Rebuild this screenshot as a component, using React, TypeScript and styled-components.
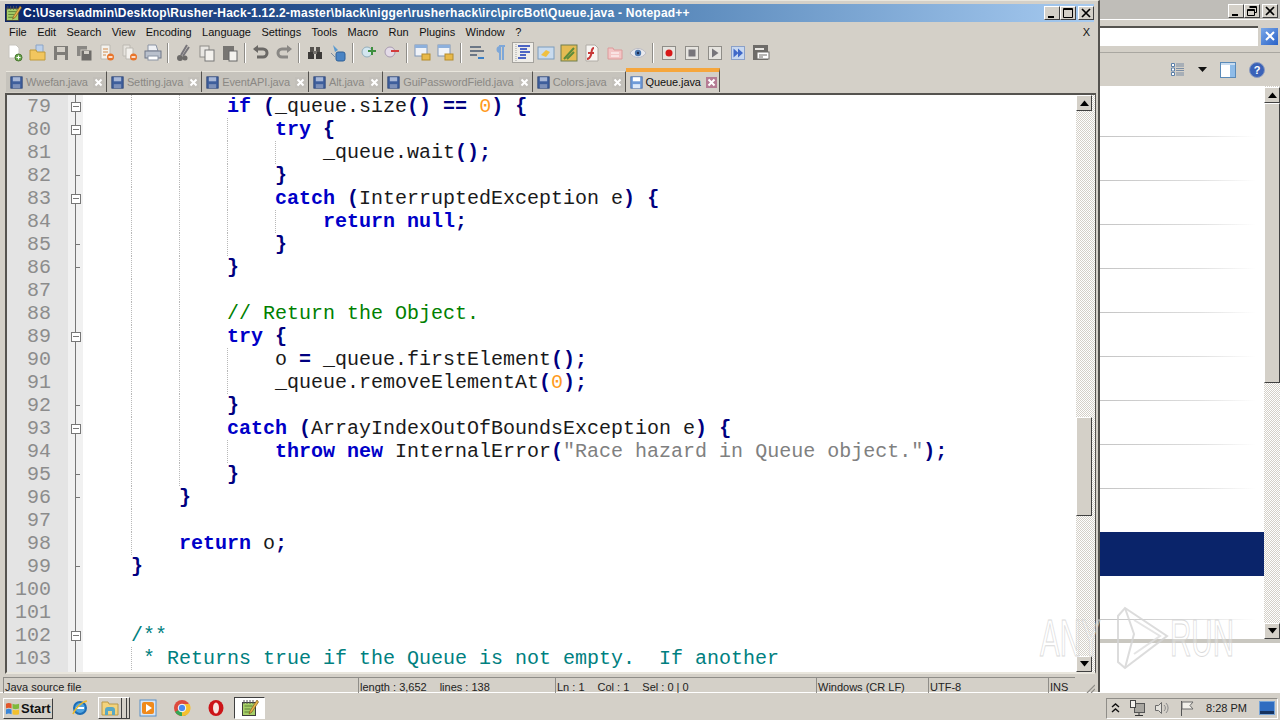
import React from 'react';
import styled, {createGlobalStyle} from 'styled-components';

const GlobalStyle = createGlobalStyle`
  html, body {
    margin: 0;
    padding: 0;
    width: 1280px;
    height: 720px;
    overflow: hidden;
    background: #ffffff;
    font-family: "Liberation Sans", Arial, sans-serif;
  }
  * {
    box-sizing: border-box;
  }
`

type TokenKind = 'plain' | 'kw' | 'op' | 'num' | 'str' | 'com' | 'doc';
type Token = [TokenKind, string];
type CodeLine = { n: number; level: number; guides: number; lead?: boolean; fold?: 'box' | 'tick'; tokens: Token[] };

const lines: CodeLine[] = [
    {n: 79, level: 3, guides: 2, fold: 'box', tokens: [['kw', 'if'], ['plain', ' '], ['op', '('], ['plain', '_queue.size'], ['op', '()'], ['plain', ' '], ['op', '=='], ['plain', ' '], ['num', '0'], ['op', ')'], ['plain', ' '], ['op', '{']]},
    {n: 80, level: 4, guides: 3, fold: 'box', tokens: [['kw', 'try'], ['plain', ' '], ['op', '{']]},
    {n: 81, level: 5, guides: 4, tokens: [['plain', '_queue.wait'], ['op', '();']]},
    {n: 82, level: 4, guides: 3, fold: 'tick', tokens: [['op', '}']]},
    {n: 83, level: 4, guides: 3, fold: 'box', tokens: [['kw', 'catch'], ['plain', ' '], ['op', '('], ['plain', 'InterruptedException e'], ['op', ')'], ['plain', ' '], ['op', '{']]},
    {n: 84, level: 5, guides: 4, tokens: [['kw', 'return'], ['plain', ' '], ['kw', 'null'], ['op', ';']]},
    {n: 85, level: 4, guides: 3, fold: 'tick', tokens: [['op', '}']]},
    {n: 86, level: 3, guides: 2, fold: 'tick', tokens: [['op', '}']]},
    {n: 87, level: 3, guides: 2, tokens: []},
    {n: 88, level: 3, guides: 2, tokens: [['com', '// Return the Object.']]},
    {n: 89, level: 3, guides: 2, fold: 'box', tokens: [['kw', 'try'], ['plain', ' '], ['op', '{']]},
    {n: 90, level: 4, guides: 3, tokens: [['plain', 'o '], ['op', '='], ['plain', ' _queue.firstElement'], ['op', '();']]},
    {n: 91, level: 4, guides: 3, tokens: [['plain', '_queue.removeElementAt'], ['op', '('], ['num', '0'], ['op', ');']]},
    {n: 92, level: 3, guides: 2, fold: 'tick', tokens: [['op', '}']]},
    {n: 93, level: 3, guides: 2, fold: 'box', tokens: [['kw', 'catch'], ['plain', ' '], ['op', '('], ['plain', 'ArrayIndexOutOfBoundsException e'], ['op', ')'], ['plain', ' '], ['op', '{']]},
    {n: 94, level: 4, guides: 3, tokens: [['kw', 'throw'], ['plain', ' '], ['kw', 'new'], ['plain', ' InternalError'], ['op', '('], ['str', '"Race hazard in Queue object."'], ['op', ');']]},
    {n: 95, level: 3, guides: 2, fold: 'tick', tokens: [['op', '}']]},
    {n: 96, level: 2, guides: 1, fold: 'tick', tokens: [['op', '}']]},
    {n: 97, level: 2, guides: 1, tokens: []},
    {n: 98, level: 2, guides: 1, tokens: [['kw', 'return'], ['plain', ' o'], ['op', ';']]},
    {n: 99, level: 1, guides: 0, fold: 'tick', tokens: [['op', '}']]},
    {n: 100, level: 0, guides: 0, tokens: []},
    {n: 101, level: 0, guides: 0, tokens: []},
    {n: 102, level: 1, guides: 0, fold: 'box', tokens: [['doc', '/**']]},
    {n: 103, level: 1, guides: 0, lead: true, tokens: [['doc', '* Returns true if the Queue is not empty.  If another']]},
];

const tabs = ['Wwefan.java', 'Setting.java', 'EventAPI.java', 'Alt.java', 'GuiPasswordField.java', 'Colors.java', 'Queue.java'];
const menus = ['File', 'Edit', 'Search', 'View', 'Encoding', 'Language', 'Settings', 'Tools', 'Macro', 'Run', 'Plugins', 'Window', '?'];

const tokenColors: Record<TokenKind, string> = {
    plain: '#1a1a1a',
    kw: '#0000c8',
    op: '#000080',
    num: '#ff9a20',
    str: '#808080',
    com: '#008000',
    doc: '#008080',
};

const DiskIcon = ({active}: {active?: boolean}) => (
    <svg width="13" height="13" viewBox="0 0 16 16">
        <rect x="1" y="1" width="14" height="14" fill={active ? '#6f9bd8' : '#3f5f9c'} stroke={active ? '#4a6ea8' : '#2c4478'}/>
        <rect x="3.5" y="1.5" width="9" height="5" fill={active ? '#ffffff' : '#a9b8d6'}/>
        <rect x="3.5" y="10" width="9" height="5" fill={active ? '#dce8f8' : '#7d90b8'}/>
    </svg>
);

const CloseIcon = ({active}: {active?: boolean}) => (
    <svg width="11" height="11" viewBox="0 0 11 11">
        <rect x="0" y="0" width="11" height="11" fill={active ? '#b57c94' : '#c2bfb9'}/>
        <path d="M2.5 2.5l6 6M8.5 2.5l-6 6" stroke="#ffffff" strokeWidth="2"/>
    </svg>
);

const ToolIcon = ({kind}: {kind: string}) => {
    switch (kind) {
        case 'new':
            return <svg width="18" height="18" viewBox="0 0 18 18"><path d="M3 1h7l3 3v10H3z" fill="#fff" stroke="#c9c6c0"/><circle cx="12.5" cy="13.5" r="3.5" fill="#6aa84f" stroke="#49752f"/><path d="M12.5 11.5v4M10.5 13.5h4" stroke="#fff"/></svg>;
        case 'open':
            return <svg width="18" height="18" viewBox="0 0 18 18"><path d="M7 1h7v8H7z" fill="#bcd0ea" stroke="#8ba4c6"/><path d="M1 6h6l1 2h8v8H1z" fill="#f2c65e" stroke="#c09a3a"/></svg>;
        case 'save':
            return <svg width="18" height="18" viewBox="0 0 18 18"><rect x="2" y="2" width="14" height="14" fill="#7e7c78"/><rect x="5" y="3" width="8" height="5" fill="#d4d0c8"/><rect x="5" y="11" width="8" height="5" fill="#d4d0c8"/></svg>;
        case 'saveall':
            return <svg width="18" height="18" viewBox="0 0 18 18"><rect x="2" y="2" width="10" height="10" fill="#8a8884"/><rect x="6" y="6" width="11" height="11" fill="#6e6c69" stroke="#d4d0c8"/><rect x="9" y="7" width="5" height="3" fill="#d4d0c8"/></svg>;
        case 'close':
            return <svg width="18" height="18" viewBox="0 0 18 18"><path d="M3 1h9v14H3z" fill="#f4f2ee" stroke="#bcb9b2"/><path d="M5 5h5M5 8h5M5 11h3" stroke="#d08a4a"/><circle cx="12.5" cy="13" r="3.5" fill="#e8742a"/><path d="M10.5 13h4" stroke="#fff" strokeWidth="1.5"/></svg>;
        case 'closeall':
            return <svg width="18" height="18" viewBox="0 0 18 18"><path d="M2 1h7v11H2z" fill="#e6e3dd" stroke="#bcb9b2"/><path d="M5 4h7v11H5z" fill="#f4f2ee" stroke="#bcb9b2"/><circle cx="12.5" cy="13" r="3.5" fill="#e8742a"/><path d="M10.5 13h4" stroke="#fff" strokeWidth="1.5"/></svg>;
        case 'print':
            return <svg width="18" height="18" viewBox="0 0 18 18"><path d="M4 1h8l2 6H4z" fill="#eef0f4" stroke="#8a93a3"/><rect x="1" y="7" width="16" height="7" fill="#b9c0cc" stroke="#6f7787"/><rect x="4" y="12" width="10" height="4" fill="#fff" stroke="#8a93a3"/></svg>;
        case 'cut':
            return <svg width="18" height="18" viewBox="0 0 18 18"><path d="M12 1L6 11M14 3L8 12" stroke="#77757a" strokeWidth="2"/><circle cx="5" cy="14" r="3" fill="#6c6a68"/><circle cx="10" cy="14" r="2.5" fill="#6c6a68"/></svg>;
        case 'copy':
            return <svg width="18" height="18" viewBox="0 0 18 18"><rect x="2" y="2" width="9" height="11" fill="#e8e6e2" stroke="#8e8c88"/><rect x="7" y="6" width="9" height="11" fill="#f4f2ee" stroke="#777"/></svg>;
        case 'paste':
            return <svg width="18" height="18" viewBox="0 0 18 18"><rect x="2" y="2" width="11" height="14" fill="#777572"/><rect x="8" y="7" width="8" height="10" fill="#f4f2ee" stroke="#666"/></svg>;
        case 'undo':
            return <svg width="18" height="18" viewBox="0 0 18 18"><path d="M3 5h8a4 4 0 0 1 0 8H5" fill="none" stroke="#6b6966" strokeWidth="3"/><path d="M6 1v8L1 5z" fill="#6b6966"/></svg>;
        case 'redo':
            return <svg width="18" height="18" viewBox="0 0 18 18"><path d="M15 5H7a4 4 0 0 0 0 8h6" fill="none" stroke="#8a8885" strokeWidth="3"/><path d="M12 1v8l5-4z" fill="#8a8885"/></svg>;
        case 'find':
            return <svg width="18" height="18" viewBox="0 0 18 18"><rect x="2" y="8" width="6" height="7" fill="#3c3a38"/><rect x="10" y="8" width="6" height="7" fill="#3c3a38"/><rect x="4" y="3" width="4" height="5" fill="#55524e"/><rect x="10" y="3" width="4" height="5" fill="#55524e"/><rect x="7" y="7" width="4" height="3" fill="#77746f"/></svg>;
        case 'replace':
            return <svg width="18" height="18" viewBox="0 0 18 18"><path d="M4 1l5 5-3 2z" fill="#5a9ad0"/><rect x="7" y="8" width="9" height="9" rx="2" fill="#4a84c4" stroke="#2e6098"/><path d="M2 9l4 4" stroke="#7d8fa5"/></svg>;
        case 'zoomin':
            return <svg width="18" height="18" viewBox="0 0 18 18"><circle cx="7" cy="8" r="5" fill="#d3e6ef" stroke="#93aebb"/><path d="M12 3v8M8 7h8" stroke="#3f8f3f" strokeWidth="2"/></svg>;
        case 'zoomout':
            return <svg width="18" height="18" viewBox="0 0 18 18"><circle cx="7" cy="8" r="5" fill="#e4dbe8" stroke="#a89bb0"/><path d="M8 7h8" stroke="#d23c3c" strokeWidth="2"/></svg>;
        case 'sync':
            return <svg width="18" height="18" viewBox="0 0 18 18"><rect x="1" y="1" width="12" height="11" fill="#f0f3f8" stroke="#7e96b8"/><rect x="1" y="1" width="12" height="3" fill="#8db0dc"/><rect x="8" y="10" width="8" height="6" fill="#e8b949" stroke="#b58c2c"/></svg>;
        case 'wrap':
            return <svg width="18" height="18" viewBox="0 0 18 18"><path d="M2 3h11M2 7h14M2 11h7" stroke="#4a5a70" strokeWidth="1.5"/><path d="M10 14h6" stroke="#3a80c8" strokeWidth="2"/></svg>;
        case 'para':
            return <svg width="18" height="18" viewBox="0 0 18 18"><path d="M8 2h6M9 2v14M12 2v14" stroke="#7ea7d8" strokeWidth="2"/><path d="M9 2a3 3 0 0 0 0 7z" fill="#7ea7d8"/></svg>;
        case 'indent':
            return <svg width="22" height="21" viewBox="0 0 22 21"><rect x="0.5" y="0.5" width="21" height="20" fill="#efede8" stroke="#a5a39e"/><path d="M4 2v17" stroke="#a0a0a0" strokeDasharray="1 1"/><path d="M6 4h12M8 7h7M8 10h10M8 13h6M6 16h8" stroke="#1838b8" strokeWidth="1.6"/></svg>;
        case 'map':
            return <svg width="18" height="18" viewBox="0 0 18 18"><rect x="1" y="3" width="16" height="12" fill="#c9dbee" stroke="#7c9cbc"/><path d="M4 11l5-5 4 2-4 5z" fill="#f0c040"/></svg>;
        case 'lang':
            return <svg width="18" height="18" viewBox="0 0 18 18"><rect x="1" y="1" width="16" height="16" fill="#e4bb52" stroke="#6f7f4f"/><path d="M4 15L14 4M7 15l7-7" stroke="#5c8c3c" strokeWidth="2"/></svg>;
        case 'func':
            return <svg width="18" height="18" viewBox="0 0 18 18"><path d="M3 1h9l3 3v13H3z" fill="#f7f5f2" stroke="#b0aca6"/><path d="M11 4c-3 0-2 4-3 7s-2 4-4 4M5 9h6" fill="none" stroke="#c83838" strokeWidth="2"/></svg>;
        case 'folder':
            return <svg width="18" height="18" viewBox="0 0 18 18"><path d="M2 4h5l1 2h8v9H2z" fill="#f3c6c6" stroke="#dc9a9a"/><path d="M5 9h8M5 12h8" stroke="#ffffff"/></svg>;
        case 'eye':
            return <svg width="18" height="18" viewBox="0 0 18 18"><path d="M1 9c4-6 12-6 16 0-4 6-12 6-16 0z" fill="#e8e8ec" stroke="#bcbcc4"/><circle cx="9" cy="9" r="3.2" fill="#4c78b0"/><circle cx="9" cy="9" r="1.2" fill="#1c2c50"/></svg>;
        case 'rec':
            return <svg width="16" height="16" viewBox="0 0 16 16"><rect x="1.5" y="1.5" width="13" height="13" fill="#e6e4df" stroke="#8f8d88"/><circle cx="8" cy="8" r="3.5" fill="#d81818"/></svg>;
        case 'stop':
            return <svg width="16" height="16" viewBox="0 0 16 16"><rect x="1.5" y="1.5" width="13" height="13" fill="#e6e4df" stroke="#8f8d88"/><rect x="4.5" y="4.5" width="7" height="7" fill="#77757a"/></svg>;
        case 'play':
            return <svg width="16" height="16" viewBox="0 0 16 16"><rect x="1.5" y="1.5" width="13" height="13" fill="#e6e4df" stroke="#8f8d88"/><path d="M5 3.5l6.5 4.5L5 12.5z" fill="#77757a"/></svg>;
        case 'playm':
            return <svg width="16" height="16" viewBox="0 0 16 16"><rect x="1.5" y="1.5" width="13" height="13" fill="#c8d8f0" stroke="#8aa0c8"/><path d="M3.5 3.5l5 4.5-5 4.5zM8 3.5l5 4.5-5 4.5z" fill="#3f68c8"/></svg>;
        case 'savem':
            return <svg width="18" height="18" viewBox="0 0 18 18"><rect x="1" y="1" width="15" height="15" fill="#6e6c69"/><rect x="3" y="4" width="9" height="2" fill="#e8e6e2"/><rect x="5" y="8" width="12" height="7" fill="#fff" stroke="#6e6c69"/><path d="M7 11h8M7 13h4" stroke="#6e6c69"/></svg>;
        default:
            return null;
    }
};

const toolGroups = [
    ['new', 'open', 'save', 'saveall', 'close', 'closeall', 'print'],
    ['cut', 'copy', 'paste'],
    ['undo', 'redo'],
    ['find', 'replace'],
    ['zoomin', 'zoomout'],
    ['sync', 'sync'],
    ['wrap', 'para', 'indent', 'map', 'lang', 'func', 'folder', 'eye'],
    ['rec', 'stop', 'play', 'playm', 'savem'],
];

const WinButton = ({kind}: {kind: 'min' | 'max' | 'restore' | 'close'}) => (
    <CaptionButton>
        <svg width="12" height="12" viewBox="0 0 12 12">
            {kind === 'min' && <rect x="2" y="9" width="6" height="2" fill="#000"/>}
            {kind === 'max' && <path d="M1.5 1.5h9v9h-9zM1.5 2.5h9" fill="none" stroke="#000"/>}
            {kind === 'restore' && <path d="M3.5 1.5h7v6h-2M3.5 2.5h7M1.5 4.5h7v6h-7zM1.5 5.5h7" fill="none" stroke="#000"/>}
            {kind === 'close' && <path d="M2 2l8 8M10 2l-8 8" stroke="#000" strokeWidth="1.7"/>}
        </svg>
    </CaptionButton>
);

const Arrow = ({down}: {down?: boolean}) => (
    <ArrowButton>
        <svg width="9" height="6" viewBox="0 0 9 6">
            <path d={down ? 'M0 0h9L4.5 5.5z' : 'M0 6h9L4.5 0.5z'} fill="#000"/>
        </svg>
    </ArrowButton>
);

const NotepadIcon = ({size}: {size: number}) => (
    <svg width={size} height={size} viewBox="0 0 18 18">
        <rect x="1.5" y="3.5" width="13" height="13" fill="#a6cf68" stroke="#3c3c3c"/>
        <path d="M3 1v4M6 1v4M9 1v4M12 1v4" stroke="#555"/>
        <path d="M3.5 7h8M3.5 10h6M3.5 13h7" stroke="#5c7f36"/>
        <path d="M16 1L9 12l-1 3 3-2L17.5 3z" fill="#e9b34a" stroke="#7a5a1c" strokeWidth="0.7"/>
    </svg>
);

const App: React.FC = () => {
    return (
        <Screen>
            <GlobalStyle/>
            <Desktop>
                <NotepadWindow>
                    <TitleBar>
                        <NotepadIcon size={17}/>
                        <TitleText>C:\Users\admin\Desktop\Rusher-Hack-1.12.2-master\black\nigger\rusherhack\irc\pircBot\Queue.java - Notepad++</TitleText>
                        <CaptionGroup>
                            <WinButton kind="min"/>
                            <WinButton kind="max"/>
                            <CaptionGap/>
                            <WinButton kind="close"/>
                        </CaptionGroup>
                    </TitleBar>
                    <MenuBar>
                        {menus.map(m => <MenuItem key={m}>{m}</MenuItem>)}
                        <MenuClose>X</MenuClose>
                    </MenuBar>
                    <ToolBar>
                        {toolGroups.map((group, i) => (
                            <ToolGroup key={i}>
                                {group.map((kind, j) => <ToolSlot key={j}><ToolIcon kind={kind}/></ToolSlot>)}
                            </ToolGroup>
                        ))}
                    </ToolBar>
                    <TabStrip>
                        {tabs.map((t, i) => {
                            const active = i === tabs.length - 1;
                            return (
                                <Tab key={t} $active={active}>
                                    <DiskIcon active={active}/>
                                    <TabLabel $active={active}>{t}</TabLabel>
                                    <CloseIcon active={active}/>
                                </Tab>
                            );
                        })}
                    </TabStrip>
                    <EditorFrame>
                        <Editor>
                            <Gutter>
                                {lines.map(l => <LineNumber key={l.n}>{l.n}</LineNumber>)}
                            </Gutter>
                            <FoldMargin>
                                {lines.map(l => (
                                    <FoldCell key={l.n}>
                                        {l.fold === 'box' && <FoldBox/>}
                                        {l.fold === 'tick' && <FoldTick/>}
                                    </FoldCell>
                                ))}
                            </FoldMargin>
                            <Code>
                                {lines.map(l => (
                                    <Line key={l.n}>
                                        {Array.from({length: l.level}).map((_, i) => (
                                            <Indent key={i} $guide={i > 0 && i <= l.guides}/>
                                        ))}
                                        {l.lead && <Indent $guide $narrow/>}
                                        {l.tokens.map((tok, i) => <Tok key={i} $kind={tok[0]}>{tok[1]}</Tok>)}
                                    </Line>
                                ))}
                            </Code>
                        </Editor>
                        <ScrollBar>
                            <Arrow/>
                            <ScrollSpace $flex={306}/>
                            <Thumb $height={99}/>
                            <ScrollSpace $flex={140}/>
                            <Arrow down/>
                        </ScrollBar>
                    </EditorFrame>
                    <StatusBar>
                        <StatusCell $width={355}>Java source file</StatusCell>
                        <StatusCell $width={197} $gap={13}>
                            <span>length : 3,652</span>
                            <span>lines : 138</span>
                        </StatusCell>
                        <StatusCell $width={261} $gap={13}>
                            <span>Ln : 1</span>
                            <span>Col : 1</span>
                            <span>Sel : 0 | 0</span>
                        </StatusCell>
                        <StatusCell $width={112}>Windows (CR LF)</StatusCell>
                        <StatusCell $width={120}>UTF-8</StatusCell>
                        <StatusCell $width={27}>INS</StatusCell>
                        <Grip>
                            <svg width="10" height="10" viewBox="0 0 10 10">
                                <path d="M2 10L10 2M6 10l4-4" stroke="#8f8d88" strokeWidth="1.2"/>
                            </svg>
                        </Grip>
                    </StatusBar>
                </NotepadWindow>
                <Explorer>
                    <ExplorerTitle>
                        <CaptionGroup>
                            <WinButton kind="min"/>
                            <WinButton kind="restore"/>
                            <CaptionGap/>
                            <WinButton kind="close"/>
                        </CaptionGroup>
                    </ExplorerTitle>
                    <SearchRow>
                        <SearchBox/>
                        <SearchClear>
                            <svg width="12" height="12" viewBox="0 0 12 12">
                                <path d="M2 2l8 8M10 2l-8 8" stroke="#fff" strokeWidth="2"/>
                            </svg>
                        </SearchClear>
                    </SearchRow>
                    <ExplorerTools>
                        <svg width="15" height="15" viewBox="0 0 15 15">
                            <path d="M1.5 1.5h3v3h-3zM1.5 6h3v3h-3zM1.5 10.5h3v3h-3z" fill="#fff" stroke="#5a7fa8"/>
                            <path d="M6 2h8M6 4h8M6 6.5h8M6 8.5h8M6 11h8M6 13h8" stroke="#7a8da5"/>
                        </svg>
                        <svg width="9" height="5" viewBox="0 0 9 5"><path d="M0 0h9L4.5 5z" fill="#111"/></svg>
                        <svg width="16" height="16" viewBox="0 0 16 16">
                            <rect x="0.5" y="0.5" width="15" height="15" fill="#fff" stroke="#5a8ab8"/>
                            <rect x="10" y="1" width="5" height="14" fill="#8fbce8"/>
                            <rect x="1" y="1" width="14" height="2" fill="#c8dcf0"/>
                        </svg>
                        <svg width="16" height="16" viewBox="0 0 16 16">
                            <circle cx="8" cy="8" r="7.5" fill="#3a62b8" stroke="#8c9cc0"/>
                            <text x="8" y="12" textAnchor="middle" fontSize="11" fontWeight="bold" fill="#fff" fontFamily="Liberation Sans">?</text>
                        </svg>
                    </ExplorerTools>
                    <ExplorerBody>
                        <RowList>
                            <ListRow $height={51}/>
                            {Array.from({length: 8}).map((_, i) => <ListRow key={i} $height={44}/>)}
                            <ListRow $height={43} $plain/>
                            <SelectedRow/>
                            <ListRow $height={44}/>
                        </RowList>
                        <SideScroll>
                            <Arrow/>
                            <Thumb $height={280}/>
                            <ScrollSpace $flex={1}/>
                            <Arrow down/>
                        </SideScroll>
                    </ExplorerBody>
                    <ExplorerFooter/>
                </Explorer>
                <Watermark>
                    <WatermarkText $width={70}>ANY</WatermarkText>
                    <svg width="60" height="66" viewBox="0 0 60 66">
                        <path d="M15 2L57 30 15 62 8 56V10z" fill="none" stroke="#d4d4d4" strokeWidth="2"/>
                        <path d="M15 2L24 28 15 62" fill="none" stroke="#d4d4d4" strokeWidth="2"/>
                        <path d="M24 14L50 30 24 48" fill="none" stroke="#dedede" strokeWidth="2"/>
                    </svg>
                    <WatermarkText $width={64}>RUN</WatermarkText>
                </Watermark>
            </Desktop>
            <Taskbar>
                <StartButton>
                    <svg width="15" height="15" viewBox="0 0 16 16">
                        <path d="M1 3c2-1 4-1 6 0v5C5 7 3 7 1 8z" fill="#e2562a"/>
                        <path d="M8 3c2 1 4 1 7 0v5c-3 1-5 1-7 0z" fill="#7fba3c"/>
                        <path d="M1 9c2-1 4-1 6 0v5c-2-1-4-1-6 0z" fill="#3a86d8"/>
                        <path d="M8 9c2 1 4 1 7 0v5c-3 1-5 1-7 0z" fill="#f2c02e"/>
                    </svg>
                    Start
                </StartButton>
                <QuickLaunch>
                    <TaskIcon>
                        <svg width="18" height="18" viewBox="0 0 18 18">
                            <circle cx="9" cy="9" r="6" fill="#4fa3e0" stroke="#1c6cb4" strokeWidth="2"/>
                            <path d="M5 9h8" stroke="#fff" strokeWidth="2"/>
                            <path d="M2 15C4 10 10 3 16 2" fill="none" stroke="#e8b830" strokeWidth="1.6"/>
                        </svg>
                    </TaskIcon>
                    <TaskSlot>
                        <svg width="18" height="18" viewBox="0 0 18 18">
                            <path d="M1 3h6l1 2h9v11H1z" fill="#f3d37c" stroke="#bb9a48"/>
                            <path d="M4 16v-5a3 3 0 0 1 3-3h4a3 3 0 0 1 3 3v5h-3v-4H7v4z" fill="#58a8c4"/>
                        </svg>
                        <StackLines/>
                    </TaskSlot>
                    <TaskIcon>
                        <svg width="18" height="18" viewBox="0 0 18 18">
                            <rect x="1" y="1" width="16" height="16" fill="#d8e6f6" stroke="#5890c8"/>
                            <rect x="3" y="3" width="12" height="12" rx="2" fill="#f08a1c"/>
                            <path d="M7 5l6 4-6 4z" fill="#fff"/>
                        </svg>
                    </TaskIcon>
                    <TaskIcon>
                        <svg width="18" height="18" viewBox="0 0 18 18">
                            <circle cx="9" cy="9" r="8" fill="#dd4b3e"/>
                            <path d="M9 9L2.1 13A8 8 0 0 0 13 16z" fill="#34a853"/>
                            <path d="M9 5h7.4A8 8 0 0 1 9 17z" fill="#f5c02f"/>
                            <circle cx="9" cy="9" r="3.8" fill="#4a8af0" stroke="#fff"/>
                        </svg>
                    </TaskIcon>
                    <TaskIcon>
                        <svg width="18" height="18" viewBox="0 0 18 18">
                            <ellipse cx="9" cy="9" rx="7.5" ry="8" fill="#cc1418"/>
                            <ellipse cx="9" cy="9" rx="3" ry="5.6" fill="#f6e6e2"/>
                        </svg>
                    </TaskIcon>
                    <ActiveTask><NotepadIcon size={18}/></ActiveTask>
                </QuickLaunch>
                <Tray>
                    <svg width="9" height="10" viewBox="0 0 9 10"><path d="M1 4l3.5-3L8 4M1 9l3.5-3L8 9" fill="none" stroke="#111" strokeWidth="1.4"/></svg>
                    <svg width="16" height="16" viewBox="0 0 16 16">
                        <rect x="5.5" y="3.5" width="10" height="9" fill="#a8a6a0" stroke="#555"/>
                        <rect x="1.5" y="0.5" width="5" height="7" fill="#f4f2ee" stroke="#444"/>
                        <path d="M10 13v2M6 15.5h8" stroke="#333"/>
                    </svg>
                    <svg width="16" height="16" viewBox="0 0 16 16">
                        <path d="M1.5 5.5h3l3-3v11l-3-3h-3z" fill="#e4e2dc" stroke="#6a6a6a"/>
                        <path d="M10 5a4 4 0 0 1 0 6M12 3a7 7 0 0 1 0 10" fill="none" stroke="#8a8a8a"/>
                    </svg>
                    <svg width="16" height="16" viewBox="0 0 16 16">
                        <path d="M2.5 1v15" stroke="#555"/>
                        <path d="M3 2h11l-3 3.5 3 3.5H3z" fill="#f2f0ea" stroke="#6a6a6a"/>
                    </svg>
                    <Clock>8:28 PM</Clock>
                    <svg width="16" height="14" viewBox="0 0 16 14">
                        <rect x="0.5" y="0.5" width="15" height="13" fill="#2f6cc0" stroke="#76a4d8"/>
                        <rect x="1" y="10" width="14" height="3" fill="#16325e"/>
                    </svg>
                </Tray>
            </Taskbar>
        </Screen>
    );
};

export default App;

const Screen = styled.div`
  width: 1280px;
  height: 720px;
  display: flex;
  flex-direction: column;
  overflow: hidden;
  background: #ffffff;
`
const Desktop = styled.div`
  position: relative;
  height: 692px;
  display: flex;
  background: #ffffff;
`
const NotepadWindow = styled.div`
  width: 1100px;
  height: 692px;
  flex: none;
  display: flex;
  flex-direction: column;
  background: #d4d0c8;
  padding: 3px 2px 0 3px;
  border-top: 1px solid #e9e6dd;
  border-right: 2px solid #55534f;
`
const TitleBar = styled.div`
  height: 18px;
  flex: none;
  display: flex;
  align-items: center;
  gap: 1px;
  margin: 0 2px 0 2px;
  background: linear-gradient(90deg, #0a246a 0%, #3a6ea5 45%, #a6caf0 100%);
`
const TitleText = styled.div`
  flex: 1;
  color: #ffffff;
  font-size: 12px;
  letter-spacing: 0.23px;
  font-weight: bold;
  white-space: nowrap;
  overflow: hidden;
`
const CaptionGroup = styled.div`
  display: flex;
  align-items: center;
`
const CaptionGap = styled.div`
  width: 2px;
`
const CaptionButton = styled.div`
  width: 16px;
  height: 14px;
  display: flex;
  align-items: center;
  justify-content: center;
  background: #d4d0c8;
  border: 1px solid;
  border-color: #ffffff #404040 #404040 #ffffff;
`
const MenuBar = styled.div`
  height: 20px;
  flex: none;
  display: flex;
  align-items: center;
  gap: 10.4px;
  padding: 0 6px;
  font-size: 11px;
  color: #111111;
`
const MenuItem = styled.span`
  white-space: nowrap;
`
const MenuClose = styled.span`
  margin-left: auto;
  font-size: 11px;
`
const ToolBar = styled.div`
  height: 21px;
  flex: none;
  display: flex;
  align-items: center;
`
const ToolGroup = styled.div`
  display: flex;
  align-items: center;
  padding-right: 3px;
  margin-right: 4px;
  border-right: 1px solid #8f8d88;
  box-shadow: 1px 0 0 #ffffff;
  height: 20px;

  &:last-child {
    border: none;
    box-shadow: none;
  }
`
const ToolSlot = styled.div`
  width: 23px;
  height: 20px;
  display: flex;
  align-items: center;
  justify-content: center;
`
const TabStrip = styled.div`
  height: 28px;
  margin-top: 2px;
  flex: none;
  display: flex;
  align-items: flex-end;
  padding-left: 3px;
  padding-bottom: 1px;
`
const Tab = styled.div<{ $active: boolean }>`
  height: ${p => (p.$active ? '24px' : '21px')};
  display: flex;
  align-items: center;
  padding: 0 2px 0 4px;
  border-right: 1px solid #55534f;
  background: ${p => (p.$active ? '#d4d0c8' : '#c6c3bc')};
  border-top: ${p => (p.$active ? '4px solid #f6a63c' : '1px solid #e9e6dd')};
`
const TabLabel = styled.span<{ $active: boolean }>`
  font-size: 11px;
  letter-spacing: -0.1px;
  margin: 0 5px 0 3px;
  white-space: nowrap;
  color: ${p => (p.$active ? '#111111' : '#8a8884')};
`
const EditorFrame = styled.div`
  height: 581px;
  flex: none;
  display: flex;
  background: #ffffff;
  border-style: solid;
  border-width: 2px 1px 2px 2px;
  border-color: #55534f #55534f #e9e6dd #55534f;
  margin-left: 2px;
`
const Editor = styled.div`
  flex: 1;
  display: flex;
  overflow: hidden;
`
const Gutter = styled.div`
  width: 61px;
  flex: none;
  background: #e4e4e4;
  padding-right: 17px;
  color: #8c8c8c;
  font-family: "Liberation Mono", "Courier New", monospace;
  font-size: 20px;
  text-align: right;
`
const LineNumber = styled.div`
  height: 23px;
  line-height: 23px;
`
const FoldMargin = styled.div`
  width: 15px;
  flex: none;
  background: linear-gradient(#777777, #777777) 7px 0 / 1px 100% no-repeat #f1f1f1;
`
const FoldCell = styled.div`
  height: 23px;
  display: flex;
  align-items: center;
  justify-content: flex-start;
  padding-left: 4px;
`
const FoldBox = styled.div`
  width: 10px;
  height: 10px;
  margin-left: -1px;
  background: linear-gradient(#777777, #777777) center / 6px 1px no-repeat #ffffff;
  border: 1px solid #777777;
`
const FoldTick = styled.div`
  width: 4px;
  height: 1px;
  margin-left: 4px;
  background: #777777;
`
const Code = styled.div`
  flex: 1;
  font-family: "Liberation Mono", "Courier New", monospace;
  font-size: 20px;
  white-space: pre;
`
const Line = styled.div`
  height: 23px;
  line-height: 23px;
  display: flex;
`
const Indent = styled.div<{ $guide: boolean; $narrow?: boolean }>`
  width: ${p => (p.$narrow ? '12px' : '48px')};
  height: 23px;
  flex: none;
  background-image: ${p => (p.$guide ? 'repeating-linear-gradient(#b8b8b8 0 1px, transparent 1px 2px)' : 'none')};
  background-size: 1px 100%;
  background-repeat: no-repeat;
`
const Tok = styled.span<{ $kind: TokenKind }>`
  color: ${p => tokenColors[p.$kind]};
  font-weight: ${p => (p.$kind === 'kw' || p.$kind === 'op' ? 'bold' : 'normal')};
`
const dither = `
  background-color: #ffffff;
  background-image: conic-gradient(#d4d0c8 25%, transparent 0 50%, #d4d0c8 0 75%, transparent 0);
  background-size: 2px 2px;
`
const ScrollBar = styled.div`
  width: 19px;
  flex: none;
  padding-right: 3px;
  display: flex;
  flex-direction: column;
  ${dither}
`
const ScrollSpace = styled.div<{ $flex: number }>`
  flex: ${p => p.$flex};
`
const ArrowButton = styled.div`
  height: 16px;
  width: 16px;
  flex: none;
  display: flex;
  align-items: center;
  justify-content: center;
  background: #d4d0c8;
  border: 1px solid;
  border-color: #ffffff #404040 #404040 #ffffff;
`
const Thumb = styled.div<{ $height: number }>`
  height: ${p => p.$height}px;
  flex: none;
  background: #d4d0c8;
  border: 1px solid;
  border-color: #ffffff #404040 #404040 #ffffff;
`
const StatusBar = styled.div`
  height: 16px;
  flex: none;
  margin-top: 3px;
  display: flex;
  font-size: 11px;
  color: #222222;
`
const StatusCell = styled.div<{ $width: number; $gap?: number }>`
  width: ${p => p.$width}px;
  flex: none;
  display: flex;
  gap: ${p => p.$gap || 0}px;
  padding: 3px 0 0 1px;
  white-space: nowrap;
  overflow: hidden;
  border-left: 1px solid #8f8d88;
  border-top: 1px solid #8f8d88;
`
const Grip = styled.div`
  flex: 1;
  display: flex;
  align-items: flex-end;
  justify-content: flex-end;
  padding-right: 1px;
`
const Explorer = styled.div`
  flex: 1;
  display: flex;
  flex-direction: column;
  background: #ffffff;
  min-width: 0;
`
const ExplorerTitle = styled.div`
  height: 19px;
  flex: none;
  display: flex;
  justify-content: flex-end;
  padding: 2px 2px 0 0;
  background: #bfbdb8;
`
const SearchRow = styled.div`
  height: 34px;
  flex: none;
  display: flex;
  align-items: center;
  gap: 3px;
  background: #d4d0c8;
  border-top: 1px solid #ffffff;
  border-bottom: 1px solid #a9a7a1;
  padding-right: 2px;
`
const SearchBox = styled.div`
  flex: 1;
  height: 20px;
  background: #ffffff;
  border-top: 2px solid #55534f;
`
const SearchClear = styled.div`
  width: 17px;
  height: 17px;
  display: flex;
  align-items: center;
  justify-content: center;
  background: linear-gradient(135deg, #7aa8e8, #2a62c8);
`
const ExplorerTools = styled.div`
  height: 33px;
  flex: none;
  display: flex;
  align-items: center;
  justify-content: flex-end;
  gap: 13px;
  padding-right: 15px;
  background: #d4d0c8;
`
const ExplorerBody = styled.div`
  height: 553px;
  flex: none;
  display: flex;
`
const RowList = styled.div`
  flex: 1;
  overflow: hidden;
`
const ListRow = styled.div<{ $height: number; $plain?: boolean }>`
  height: ${p => p.$height}px;
  background: ${p => (p.$plain ? '#ffffff' : 'linear-gradient(90deg, #c4c4c4, #dedede 60%, #ffffff 95%)')} bottom / 100% 1px no-repeat #ffffff;
`
const SelectedRow = styled.div`
  height: 44px;
  background: #0a246a;
`
const SideScroll = styled.div`
  width: 16px;
  flex: none;
  padding-top: 1px;
  display: flex;
  flex-direction: column;
  ${dither}
`
const ExplorerFooter = styled.div`
  height: 53px;
  flex: none;
  background: #ffffff;
  border-top: 4px solid #c9c7c0;
`
const Watermark = styled.div`
  position: absolute;
  left: 1040px;
  top: 606px;
  display: flex;
  align-items: center;
  pointer-events: none;
  opacity: 0.8;
`
const WatermarkText = styled.span<{ $width: number }>`
  width: ${p => p.$width}px;
  font-family: "Liberation Sans", Arial, sans-serif;
  font-size: 51px;
  line-height: 66px;
  color: rgba(255, 255, 255, 0.35);
  -webkit-text-stroke: 1px #d2d2d2;
  transform: scaleX(0.58);
  transform-origin: left center;
  white-space: nowrap;
`
const Taskbar = styled.div`
  height: 28px;
  flex: none;
  display: flex;
  align-items: center;
  background: #d4d0c8;
  border-top: 1px solid #ffffff;
  padding: 3px 2px 0 3px;
`
const StartButton = styled.div`
  width: 50px;
  height: 21px;
  display: flex;
  align-items: center;
  gap: 1px;
  padding-left: 1px;
  font-size: 13px;
  font-weight: bold;
  color: #111111;
  background: #d4d0c8;
  border: 1px solid;
  border-color: #ffffff #404040 #404040 #ffffff;
`
const QuickLaunch = styled.div`
  display: flex;
  align-items: center;
  margin-left: 11px;
  gap: 2px;
`
const TaskIcon = styled.div`
  width: 32px;
  height: 22px;
  display: flex;
  align-items: center;
  justify-content: center;
`
const TaskSlot = styled.div`
  width: 32px;
  height: 22px;
  display: flex;
  align-items: center;
  justify-content: flex-start;
  padding-left: 2px;
  border: 1px solid;
  border-color: #ffffff #404040 #404040 #ffffff;
`
const StackLines = styled.div`
  width: 6px;
  height: 20px;
  margin-left: 2px;
  border-right: 1px solid #404040;
  border-left: 1px solid #404040;
`
const ActiveTask = styled.div`
  width: 31px;
  height: 22px;
  display: flex;
  align-items: center;
  justify-content: center;
  background: #ffffff;
  border: 1px solid;
  border-color: #404040 #ffffff #ffffff #404040;
`
const Tray = styled.div`
  margin-left: auto;
  width: 172px;
  height: 21px;
  display: flex;
  align-items: center;
  gap: 9px;
  padding: 0 2px 0 4px;
  border: 1px solid;
  border-color: #8f8d88 #ffffff #ffffff #8f8d88;
`
const Clock = styled.span`
  margin-left: auto;
  margin-right: 3px;
  font-size: 11px;
  color: #222222;
  white-space: nowrap;
`
